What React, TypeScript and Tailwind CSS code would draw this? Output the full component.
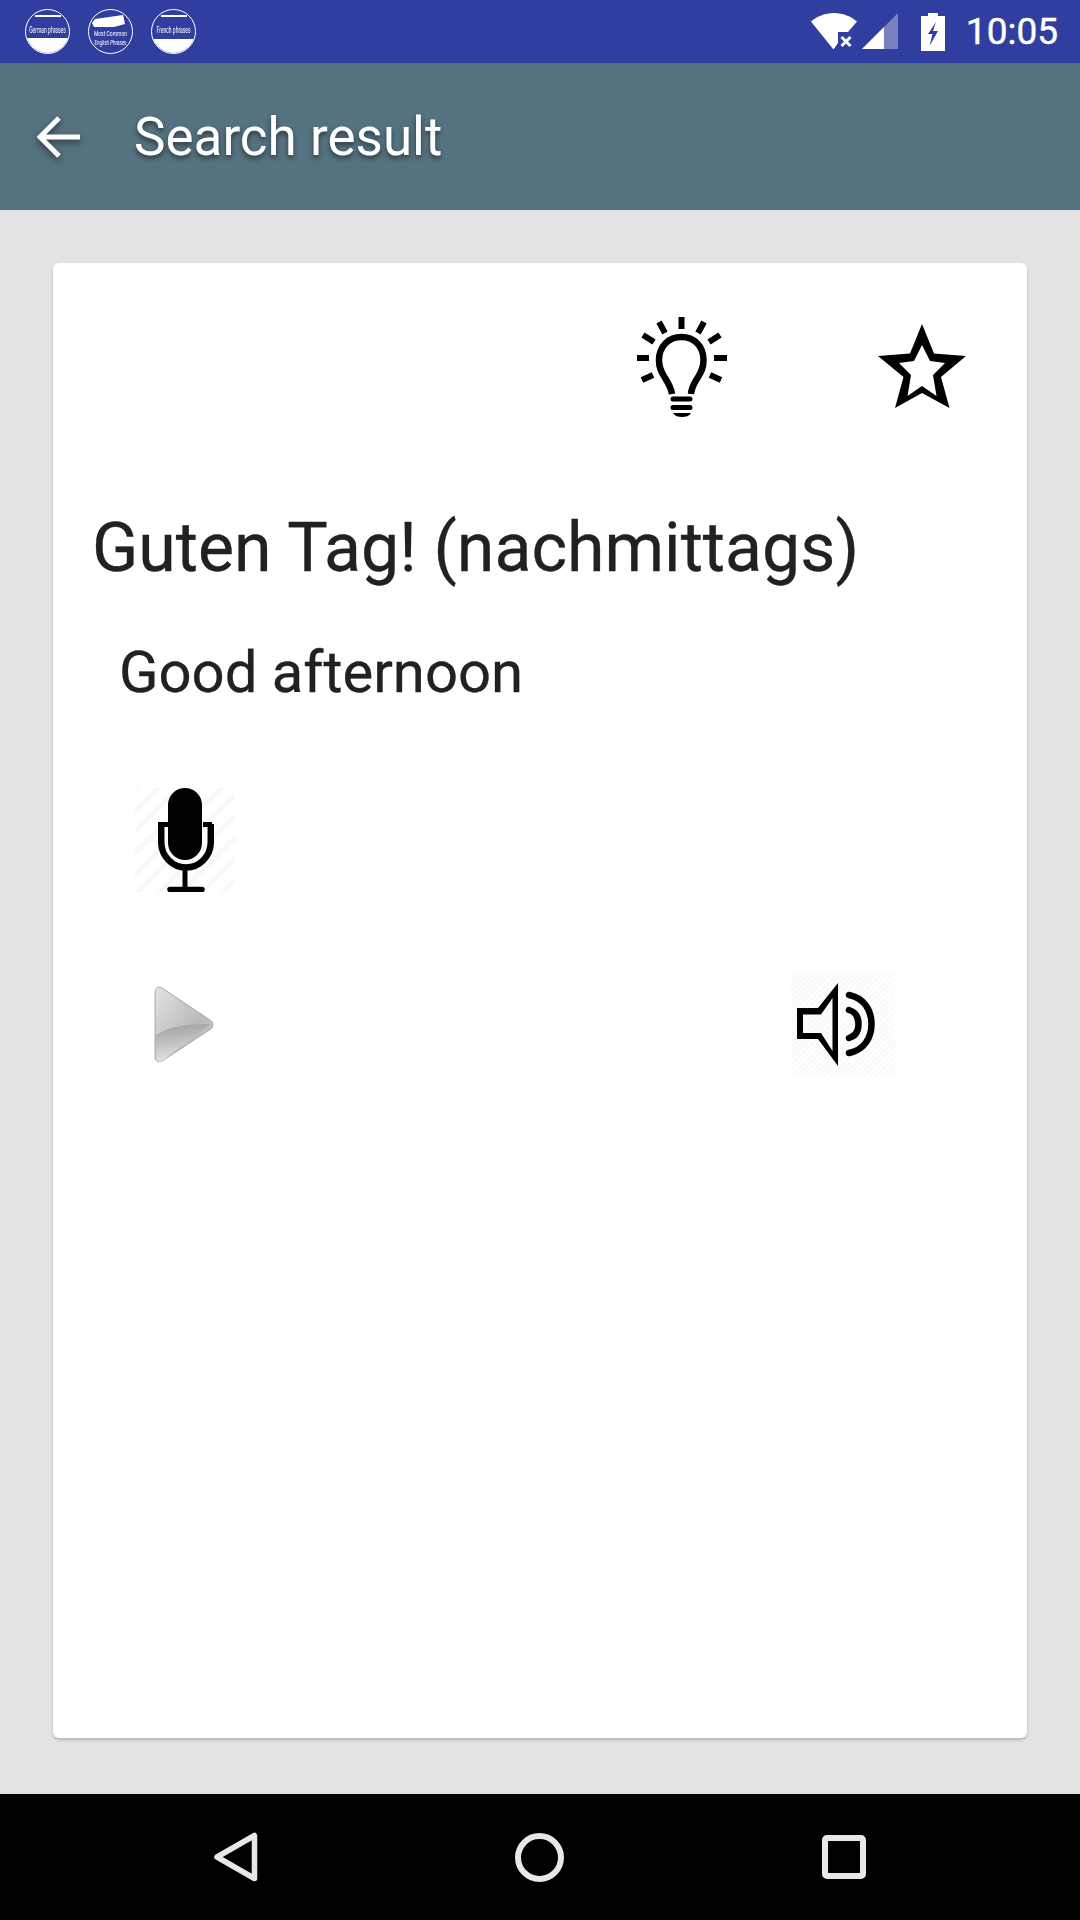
import React from "react";

const roboto = { fontFamily: "Roboto, 'Liberation Sans', sans-serif" };

function Notif({ children, top }: { children: React.ReactNode; top?: React.ReactNode }) {
  return (
    <div className="relative flex h-[45px] w-[45px] flex-col items-center overflow-hidden rounded-full border border-white text-white">
      <div className="h-[7px] w-full shrink-0">{top}</div>
      {children}
    </div>
  );
}

export default function App() {
  return (
    <div className="flex h-[1920px] w-[1080px] flex-col overflow-hidden bg-[#e3e3e3]" style={roboto}>
      {/* status bar */}
      <div className="flex h-[63px] shrink-0 items-center bg-[#303f9f] pl-[25px] pr-[22px] text-white">
        <div className="flex gap-[18px]">
          <Notif top={<div className="mx-auto mt-[5px] h-[2px] w-[26px] bg-white" />}>
            <div className="mt-[6px] h-[14px] scale-y-[1.7] whitespace-nowrap text-[5px] leading-[14px]">German phrases</div>
            <div className="mt-[1px] h-[20px] w-full bg-white" />
          </Notif>
          <Notif
            top={
              <svg width="33" height="13" viewBox="0 0 33 13" className="absolute left-[3px] top-[5px]">
                <path d="M3 4L31 0l2 9-11 3H2L0 8z" fill="#fff" />
              </svg>
            }
          >
            <div className="mt-[12px] h-[9px] scale-y-[1.5] whitespace-nowrap text-[5px] leading-[9px]">Most Common</div>
            <div className="h-[9px] scale-y-[1.5] whitespace-nowrap text-[4.500px] leading-[9px]">English Phrases</div>
          </Notif>
          <Notif top={<div className="mx-auto mt-[5px] h-[2px] w-[26px] bg-white" />}>
            <div className="mt-[6px] h-[14px] scale-y-[1.7] whitespace-nowrap text-[5px] leading-[14px]">French phrases</div>
            <div className="mt-[2px] h-[20px] w-full bg-white" />
          </Notif>
        </div>
        <div className="ml-auto flex items-center">
          <svg width="46" height="37" viewBox="0 0 46 37" className="mr-[5px]">
            <path d="M0 8.500C6 3.500 14 0 23 0s17 3.500 23 8.500L37 19H27v11l-4.500 6.500z" fill="#fff" />
            <path d="M30.500 24l9 9M39.500 24l-9 9" stroke="#fff" strokeWidth="3" />
          </svg>
          <svg width="36" height="37" viewBox="0 0 36 37" className="mr-[23px]">
            <path d="M36 0v36H0z" fill="#fff" fillOpacity="0.35" />
            <path d="M22 14v22H0z" fill="#fff" />
          </svg>
          <svg width="24" height="38" viewBox="0 0 24 38" className="mr-[21px]">
            <path
              fillRule="evenodd"
              d="M7 0h10v3h7v35H0V3h7zM15 9L7 21h4.500L8.500 33 17 18h-5z"
              fill="#fff"
            />
          </svg>
          <span className="text-[37px] leading-none [-webkit-text-stroke:0.4px_#ffffff]">10:05</span>
        </div>
      </div>

      {/* app bar */}
      <div className="flex h-[147px] shrink-0 items-center bg-[#557281]">
        <svg
          width="44"
          height="42"
          viewBox="0 0 44 42"
          className="ml-[37px] [filter:drop-shadow(0_3px_3px_rgba(0,0,0,0.5))]"
        >
          <path d="M43 21H5M22 2L3 21l19 19" fill="none" stroke="#fff" strokeWidth="5" />
        </svg>
        <span className="ml-[53px] mt-[1px] text-[53px] leading-none text-white [text-shadow:0_3px_5px_rgba(0,0,0,0.5)]">
          Search result
        </span>
      </div>

      {/* content */}
      <div className="flex-1 px-[53px] pt-[53px]">
        <div className="flex h-[1475px] flex-col rounded-[6px] bg-white shadow-[0_2px_3px_rgba(0,0,0,0.2)]">
          <div className="flex justify-end pr-[61px] pt-[54px]">
            <svg width="90" height="100" viewBox="0 0 90 100" className="mr-[151px]">
              <g stroke="#000" strokeWidth="6" fill="none">
                <path d="M44.500 0v12M22 5l6 11M67 5l-6 11M6 18l11 7M83 18l-11 7M0 41h12M77 41h13M5 63l11-5M84 63l-11-5" />
                <path strokeWidth="6.500" d="M35 77c-1-7-4-11-7-16-3-5-6-9-6-18 0-14 10-23 22.500-23S66.500 29 66.500 43c0 9-3 13-6 18-3 5-6 9-6.500 16" />
                <path strokeWidth="5" strokeLinecap="round" d="M36 82h17M36 90.500h17" />
              </g>
              <path d="M36 96h18c-2 3-5 4-9 4s-7-1-9-4z" fill="#000" />
            </svg>
            <svg width="88" height="84" viewBox="0 0 88 84" className="mt-[7px]">
              <path
                fillRule="evenodd"
                d="M44 0l12 29.500 32 2.500-25 21 8.500 31L44 69 17 84l8.500-31L0 32l32-2.500zM44 21l-8 16-15 2 12 12-3.500 21L44 62l14.500 10L55 51l12-12-15-2z"
                fill="#000"
              />
            </svg>
          </div>

          <div className="ml-[39px] mt-[91px] text-[68px] leading-[80px] text-[#212121] [-webkit-text-stroke:0.3px_#212121]">Guten Tag! (nachmittags)</div>
          <div className="ml-[66px] mt-[50px] text-[58px] leading-[68px] text-[#212121] [-webkit-text-stroke:0.3px_#212121]">Good afternoon</div>

          <div className="relative ml-[82px] mt-[82px] h-[104px] w-[100px]">
            <div className="absolute inset-0 bg-[repeating-linear-gradient(135deg,#f7f7f7_0px,#f7f7f7_2px,#ffffff_4px,#ffffff_13px,#f7f7f7_15px)]" />
            <svg width="56" height="104" viewBox="0 0 56 104" className="absolute left-[23px] top-0">
              <rect x="10" y="0" width="34" height="72" rx="17" fill="#000" />
              <path d="M3.200 36v18c0 14 11 25.500 24.800 25.500S52.800 68 52.800 54V36" fill="none" stroke="#000" strokeWidth="6.500" />
              <path d="M0 36.500h11M45 36.500h9" stroke="#000" strokeWidth="5" />
              <path d="M27 78v24" stroke="#000" strokeWidth="5" />
              <path d="M12 101.500h32" stroke="#000" strokeWidth="5.500" strokeLinecap="round" />
            </svg>
          </div>

          <div className="ml-[101px] mr-[132px] mt-[81px] flex items-center justify-between">
            <svg width="60" height="78" viewBox="0 0 60 78">
              <defs>
                <linearGradient id="playg" x1="0" y1="0" x2="1" y2="1">
                  <stop offset="0" stopColor="#e3e3e3" />
                  <stop offset="0.6" stopColor="#b9baba" />
                  <stop offset="1" stopColor="#d0d0d0" />
                </linearGradient>
                <linearGradient id="playl" x1="0" y1="0" x2="0.2" y2="1">
                  <stop offset="0" stopColor="#9b9d9d" />
                  <stop offset="1" stopColor="#e3e3e3" />
                </linearGradient>
              </defs>
              <path d="M1 6c0-4 3-6 7-4l48 32c4 2.500 4 7 0 9.500L8 75c-4 2-7 0-7-4z" fill="url(#playg)" stroke="#a5a7a7" strokeWidth="1" />
              <path d="M2 49c14-9 32-11 55-11L8 75c-4 2-6 0-6-4z" fill="url(#playl)" />
            </svg>
            <div className="relative h-[104px] w-[104px]">
              <div className="absolute inset-0 bg-[repeating-linear-gradient(135deg,#f9f9f9_0px,#f9f9f9_2px,#ffffff_2px,#ffffff_4px)]" />
              <svg width="78" height="84" viewBox="0 0 78 84" className="absolute left-[6px] top-[10px]">
                <path fillRule="evenodd" d="M41 0v83L21 56H0V25h21zM35.500 15L24 31.500H6v18.500h18L35.500 68z" fill="#000" />
                <path d="M52 12c15 3 22.500 15 22.500 29S67 67 52 70" fill="none" stroke="#000" strokeWidth="6.500" strokeLinecap="round" />
                <path d="M52 27c7 2 9.500 8 9.500 14S59 53 52 55" fill="none" stroke="#000" strokeWidth="6.500" strokeLinecap="round" />
              </svg>
            </div>
          </div>
        </div>
      </div>

      {/* nav bar */}
      <div className="flex h-[126px] shrink-0 items-center bg-black">
        <svg width="44" height="50" viewBox="0 0 44 50" className="ml-[214px]">
          <path d="M40.500 3.500v43L3 25z" fill="none" stroke="#e8e8e8" strokeWidth="5.500" strokeLinejoin="round" />
        </svg>
        <svg width="49" height="49" viewBox="0 0 49 49" className="ml-[257px]">
          <circle cx="24.500" cy="24.500" r="21.500" fill="none" stroke="#e8e8e8" strokeWidth="6" />
        </svg>
        <svg width="44" height="44" viewBox="0 0 44 44" className="ml-[258px]">
          <rect x="3" y="3" width="38" height="38" rx="2" fill="none" stroke="#e8e8e8" strokeWidth="6" />
        </svg>
      </div>
    </div>
  );
}
